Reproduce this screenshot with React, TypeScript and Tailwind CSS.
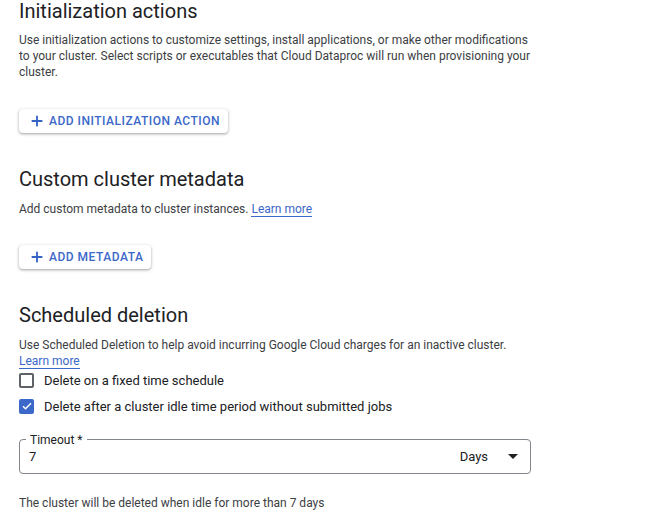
import { Plus } from 'lucide-react'

function AddButton({ label }: { label: string }) {
  return (
    <button className="flex h-6 items-center gap-[4px] rounded bg-white pl-[10px] pr-2 text-[12px] font-medium uppercase tracking-[0.5px] text-[#3b68c9] shadow-[0_1px_2px_rgba(60,64,67,0.3),0_1px_3px_1px_rgba(60,64,67,0.15)]">
      <Plus size={16} strokeWidth={2.75} className="text-[#3563c4]" />
      {label}
    </button>
  )
}

export default function App() {
  return (
    <div className="min-h-[523px] bg-white pl-[19px] font-['Roboto',sans-serif] text-[#3c4043]">
      <h2 className="-mt-[3px] text-[20px] leading-7 text-[#202124]">Initialization actions</h2>
      <p className="mt-[7px] w-[515px] text-[12px] leading-4">
        Use initialization actions to customize settings, install applications, or make other modifications to your
        cluster. Select scripts or executables that Cloud Dataproc will run when provisioning your cluster.
      </p>
      <div className="mt-[29px]">
        <AddButton label="Add initialization action" />
      </div>

      <h2 className="mt-[32px] text-[20px] leading-7 text-[#202124]">Custom cluster metadata</h2>
      <p className="mt-[8px] text-[12px] leading-4">
        Add custom metadata to cluster instances.{' '}
        <a className="border-b border-[#3b68c9] text-[#3b68c9]">Learn more</a>
      </p>
      <div className="mt-[28px]">
        <AddButton label="Add metadata" />
      </div>

      <h2 className="mt-[32px] text-[20px] leading-7 text-[#202124]">Scheduled deletion</h2>
      <p className="mt-[8px] text-[12px] leading-4">
        Use Scheduled Deletion to help avoid incurring Google Cloud charges for an inactive cluster.
        <br />
        <a className="border-b border-[#3b68c9] text-[#3b68c9]">Learn more</a>
      </p>
      <label className="mt-[2px] flex items-center gap-[10px] text-[13px] text-[#202124]">
        <span className="h-[15px] w-[15px] rounded-[2px] border-2 border-[#5f6368]" />
        Delete on a fixed time schedule
      </label>
      <label className="mt-[6px] flex items-center gap-[10px] text-[13px] text-[#202124]">
        <span className="flex h-[15px] w-[15px] items-center justify-center rounded-[2px] bg-[#3b68c9]">
          <svg viewBox="0 0 24 24" className="h-3 w-3" fill="none" stroke="white" strokeWidth={3}>
            <path d="M4 12.5l5 5L20 6.5" />
          </svg>
        </span>
        Delete after a cluster idle time period without submitted jobs
      </label>

      <div className="relative mt-[23px] flex h-[35px] w-[512px] items-center rounded border border-[#80868b] pl-[9px] pr-[12px] text-[13px] text-[#202124]">
        <span className="absolute -top-[8px] left-[6px] bg-white px-[4px] text-[12px] leading-4 text-[#202124]">
          Timeout *
        </span>
        <span className="flex-1">7</span>
        <span>Days</span>
        <svg viewBox="0 0 10 5" className="ml-[20px] h-[5px] w-[10px]">
          <path d="M0 0h10L5 5z" fill="#202124" />
        </svg>
      </div>

      <p className="mt-[21px] text-[12px] leading-4">The cluster will be deleted when idle for more than 7 days</p>
    </div>
  )
}
